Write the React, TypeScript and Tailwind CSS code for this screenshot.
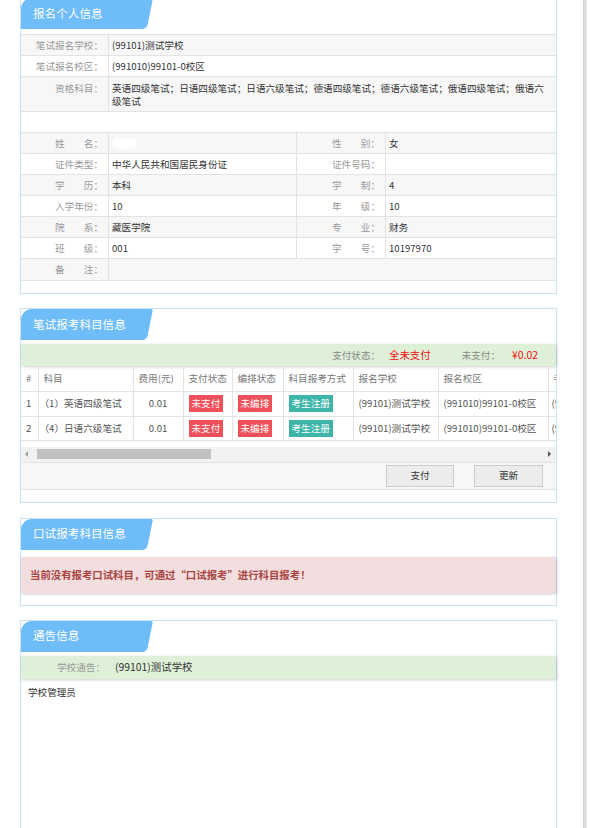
import type { ReactNode } from 'react';

const FONT = "font-['Noto_Sans_CJK_SC','Liberation_Sans',sans-serif]";

function PanelTab({ title }: { title: string }) {
    return (
        <div className="relative h-[31px] w-[132px] shrink-0">
            <svg className="absolute inset-0" width="132" height="31" viewBox="0 0 132 31">
                <path d="M0 31V11A11 11 0 0 1 11 0H130Q132 0 131.6 2L126.8 26Q125.8 31 120.5 31Z" fill="#6ebdf8" />
            </svg>
            <span className="relative flex h-full items-center pl-[12px] text-[11.6px] text-white">{title}</span>
        </div>
    );
}

function Panel({ title, className = '', children }: { title: string; className?: string; children: ReactNode }) {
    return (
        <div className={`border border-[#c9e2f8] bg-white ${className}`}>
            <PanelTab title={title} />
            {children}
        </div>
    );
}

function Label({ children, className = 'w-[88px]' }: { children?: ReactNode; className?: string }) {
    return (
        <div className={`flex shrink-0 items-center justify-end border-r border-[#e3e3e3] pr-[5px] text-[#999] ${className}`}>
            {children}
        </div>
    );
}

function Row({ className, children }: { className: string; children?: ReactNode }) {
    return <div className={`flex border-b border-[#e3e3e3] ${className}`}>{children}</div>;
}

const pairs = [
    { l1: '姓　　名：', v1: 'blob', l2: '性　　别：', v2: '女' },
    { l1: '证件类型：', v1: '中华人民共和国居民身份证', l2: '证件号码：', v2: '' },
    { l1: '学　　历：', v1: '本科', l2: '学　　制：', v2: '4' },
    { l1: '入学年份：', v1: '10', l2: '年　　级：', v2: '10' },
    { l1: '院　　系：', v1: '藏医学院', l2: '专　　业：', v2: '财务' },
    { l1: '班　　级：', v1: '001', l2: '学　　号：', v2: '10197970' },
];

function PersonalInfo() {
    return (
        <Panel title="报名个人信息" className="-mt-[3px] pb-[12px]">
            <div className="mt-[5px] border-t border-[#e3e3e3] text-[9.6px] text-[#333]">
                <Row className="h-[21px] bg-[#f7f7f7]">
                    <Label>笔试报名学校：</Label>
                    <div className="flex items-center pl-[3px]">(99101)测试学校</div>
                </Row>
                <Row className="h-[21px] bg-white">
                    <Label>笔试报名校区：</Label>
                    <div className="flex items-center pl-[3px]">(991010)99101-0校区</div>
                </Row>
                <Row className="h-[35px] bg-[#f7f7f7]">
                    <div className="w-[88px] shrink-0 border-r border-[#e3e3e3] pr-[5px] pt-[5px] text-right leading-[13px] text-[#999]">
                        资格科目：
                    </div>
                    <div className="whitespace-nowrap pl-[3px] pt-[5px] leading-[13px]">
                        英语四级笔试；日语四级笔试；日语六级笔试；德语四级笔试；德语六级笔试；俄语四级笔试；俄语六
                        <br />
                        级笔试
                    </div>
                </Row>
                <Row className="h-[21px] bg-white" />
                {pairs.map((p, i) => (
                    <Row key={p.l1} className={`h-[21px] ${i % 2 === 0 ? 'bg-[#f7f7f7]' : 'bg-white'}`}>
                        <Label>{p.l1}</Label>
                        <div className="flex w-[188px] shrink-0 items-center border-r border-[#e3e3e3] pl-[3px]">
                            {p.v1 === 'blob' ? (
                                <span className="ml-[1px] h-[11px] w-[24px] rounded-full bg-white blur-[1px]" />
                            ) : (
                                p.v1
                            )}
                        </div>
                        <Label className="w-[89px]">{p.l2}</Label>
                        <div className="flex items-center pl-[3px]">{p.v2}</div>
                    </Row>
                ))}
                <Row className="h-[22px] bg-[#f7f7f7]">
                    <Label>备　　注：</Label>
                </Row>
            </div>
        </Panel>
    );
}

const headers = ['#', '科目', '费用(元)', '支付状态', '编排状态', '科目报考方式', '报名学校', '报名校区', '考试时间'];
const colWidths = ['w-[17px]', 'w-[95px]', 'w-[50px]', 'w-[49px]', 'w-[51px]', 'w-[70px]', 'w-[85px]', 'w-[110px]', 'w-[110px]'];

const subjects = [
    { no: '1', name: '（1）英语四级笔试', fee: '0.01', h: 'h-[25px]' },
    { no: '2', name: '（4）日语六级笔试', fee: '0.01', h: 'h-[24px]' },
];

function Badge({ children, color }: { children: ReactNode; color: string }) {
    return <span className={`inline-flex h-[17px] items-center px-[3px] text-white ${color}`}>{children}</span>;
}

function WrittenSubjects() {
    return (
        <Panel title="笔试报考科目信息" className="mt-[14px] pb-[12px]">
            <div className="mt-[4px] flex h-[22px] items-center justify-end bg-[#dff0d8] pr-[18px] text-[9.6px] text-[#888] shadow-[1px_1px_3px_rgba(0,0,0,0.2)]">
                <span>支付状态：</span>
                <span className="ml-[9px] text-[10.4px] text-[#f20d0d]">全未支付</span>
                <span className="ml-[31px]">未支付：</span>
                <span className="ml-[12px] text-[10.4px] text-[#f20d0d]">¥0.02</span>
            </div>
            <div className="overflow-hidden">
                <table className="w-[637px] table-fixed border-collapse text-left text-[9.6px] text-[#555]">
                    <colgroup>
                        {colWidths.map((w, i) => (
                            <col key={i} className={w} />
                        ))}
                    </colgroup>
                    <thead>
                        <tr className="h-[25px] border-b border-[#e3e3e3]">
                            {headers.map((h, i) => (
                                <th
                                    key={h}
                                    className={`whitespace-nowrap border-[#e3e3e3] pl-[5px] font-normal text-[#777] ${i > 0 ? 'border-l' : ''}`}
                                >
                                    {h}
                                </th>
                            ))}
                        </tr>
                    </thead>
                    <tbody>
                        {subjects.map((s) => (
                            <tr key={s.no} className={`${s.h} border-b border-[#e3e3e3]`}>
                                <td className="pl-[5px]">{s.no}</td>
                                <td className="whitespace-nowrap border-l border-[#e3e3e3] pl-[1px]">{s.name}</td>
                                <td className="border-l border-[#e3e3e3] text-center">{s.fee}</td>
                                <td className="border-l border-[#e3e3e3] pl-[5px]">
                                    <Badge color="bg-[#f0505a]">未支付</Badge>
                                </td>
                                <td className="border-l border-[#e3e3e3] pl-[5px]">
                                    <Badge color="bg-[#f0505a]">未编排</Badge>
                                </td>
                                <td className="border-l border-[#e3e3e3] pl-[5px]">
                                    <Badge color="bg-[#3db5a8]">考生注册</Badge>
                                </td>
                                <td className="whitespace-nowrap border-l border-[#e3e3e3] pl-[5px]">(99101)测试学校</td>
                                <td className="whitespace-nowrap border-l border-[#e3e3e3] pl-[5px]">(991010)99101-0校区</td>
                                <td className="whitespace-nowrap border-l border-[#e3e3e3] pl-[3px]">(99101)测试考点</td>
                            </tr>
                        ))}
                    </tbody>
                </table>
            </div>
            <div className="mt-[6px] flex h-[15px] items-center bg-[#f1f1f1]">
                <span className="ml-[4px] h-0 w-0 border-y-[3px] border-r-[3px] border-y-transparent border-r-[#a3a3a3]" />
                <span className="ml-[9px] h-[10px] w-[174px] bg-[#c1c1c1]" />
                <span className="ml-auto mr-[5px] h-0 w-0 border-y-[3px] border-l-[3px] border-y-transparent border-l-[#505050]" />
            </div>
            <div className="flex h-[28px] items-center justify-end gap-[20px] border-y border-[#e2e2e2] bg-[#f7f7f7] pr-[13px]">
                <button className="h-[22px] w-[68px] border border-[#cdcdcd] bg-[#ececec] text-[9.6px] text-[#333]">支付</button>
                <button className="h-[22px] w-[69px] border border-[#cdcdcd] bg-[#ececec] text-[9.6px] text-[#333]">更新</button>
            </div>
        </Panel>
    );
}

function OralSubjects() {
    return (
        <Panel title="口试报考科目信息" className="mt-[15px] pb-[12px]">
            <div className="mt-[7px] flex h-[36px] items-center bg-[#f2dede] pl-[9px] text-[10.4px] font-bold text-[#a94442] shadow-[1px_1px_3px_rgba(0,0,0,0.2)]">
                当前没有报考口试科目，可通过“口试报考”进行科目报考！
            </div>
        </Panel>
    );
}

function Notice() {
    return (
        <Panel title="通告信息" className="mt-[14px] h-[260px]">
            <div className="mt-[4px] flex h-[23px] items-center bg-[#dff0d8] shadow-[1px_1px_3px_rgba(0,0,0,0.2)]">
                <span className="w-[84px] text-right text-[9.6px] text-[#999]">学校通告：</span>
                <span className="ml-[10px] text-[10.4px] text-[#333]">(99101)测试学校</span>
            </div>
            <div className="pl-[7px] pt-[6px] text-[9.6px] text-[#333]">学校管理员</div>
        </Panel>
    );
}

export default function App() {
    return (
        <div className={`flex h-[828px] w-[591px] overflow-hidden bg-white ${FONT}`}>
            <div className="w-[583px] shrink-0 pl-[20px] pr-[26px]">
                <PersonalInfo />
                <WrittenSubjects />
                <OralSubjects />
                <Notice />
            </div>
            <div className="w-[4px] shrink-0 bg-linear-to-r from-[#cfcfcf] to-[#ececec]" />
        </div>
    );
}
